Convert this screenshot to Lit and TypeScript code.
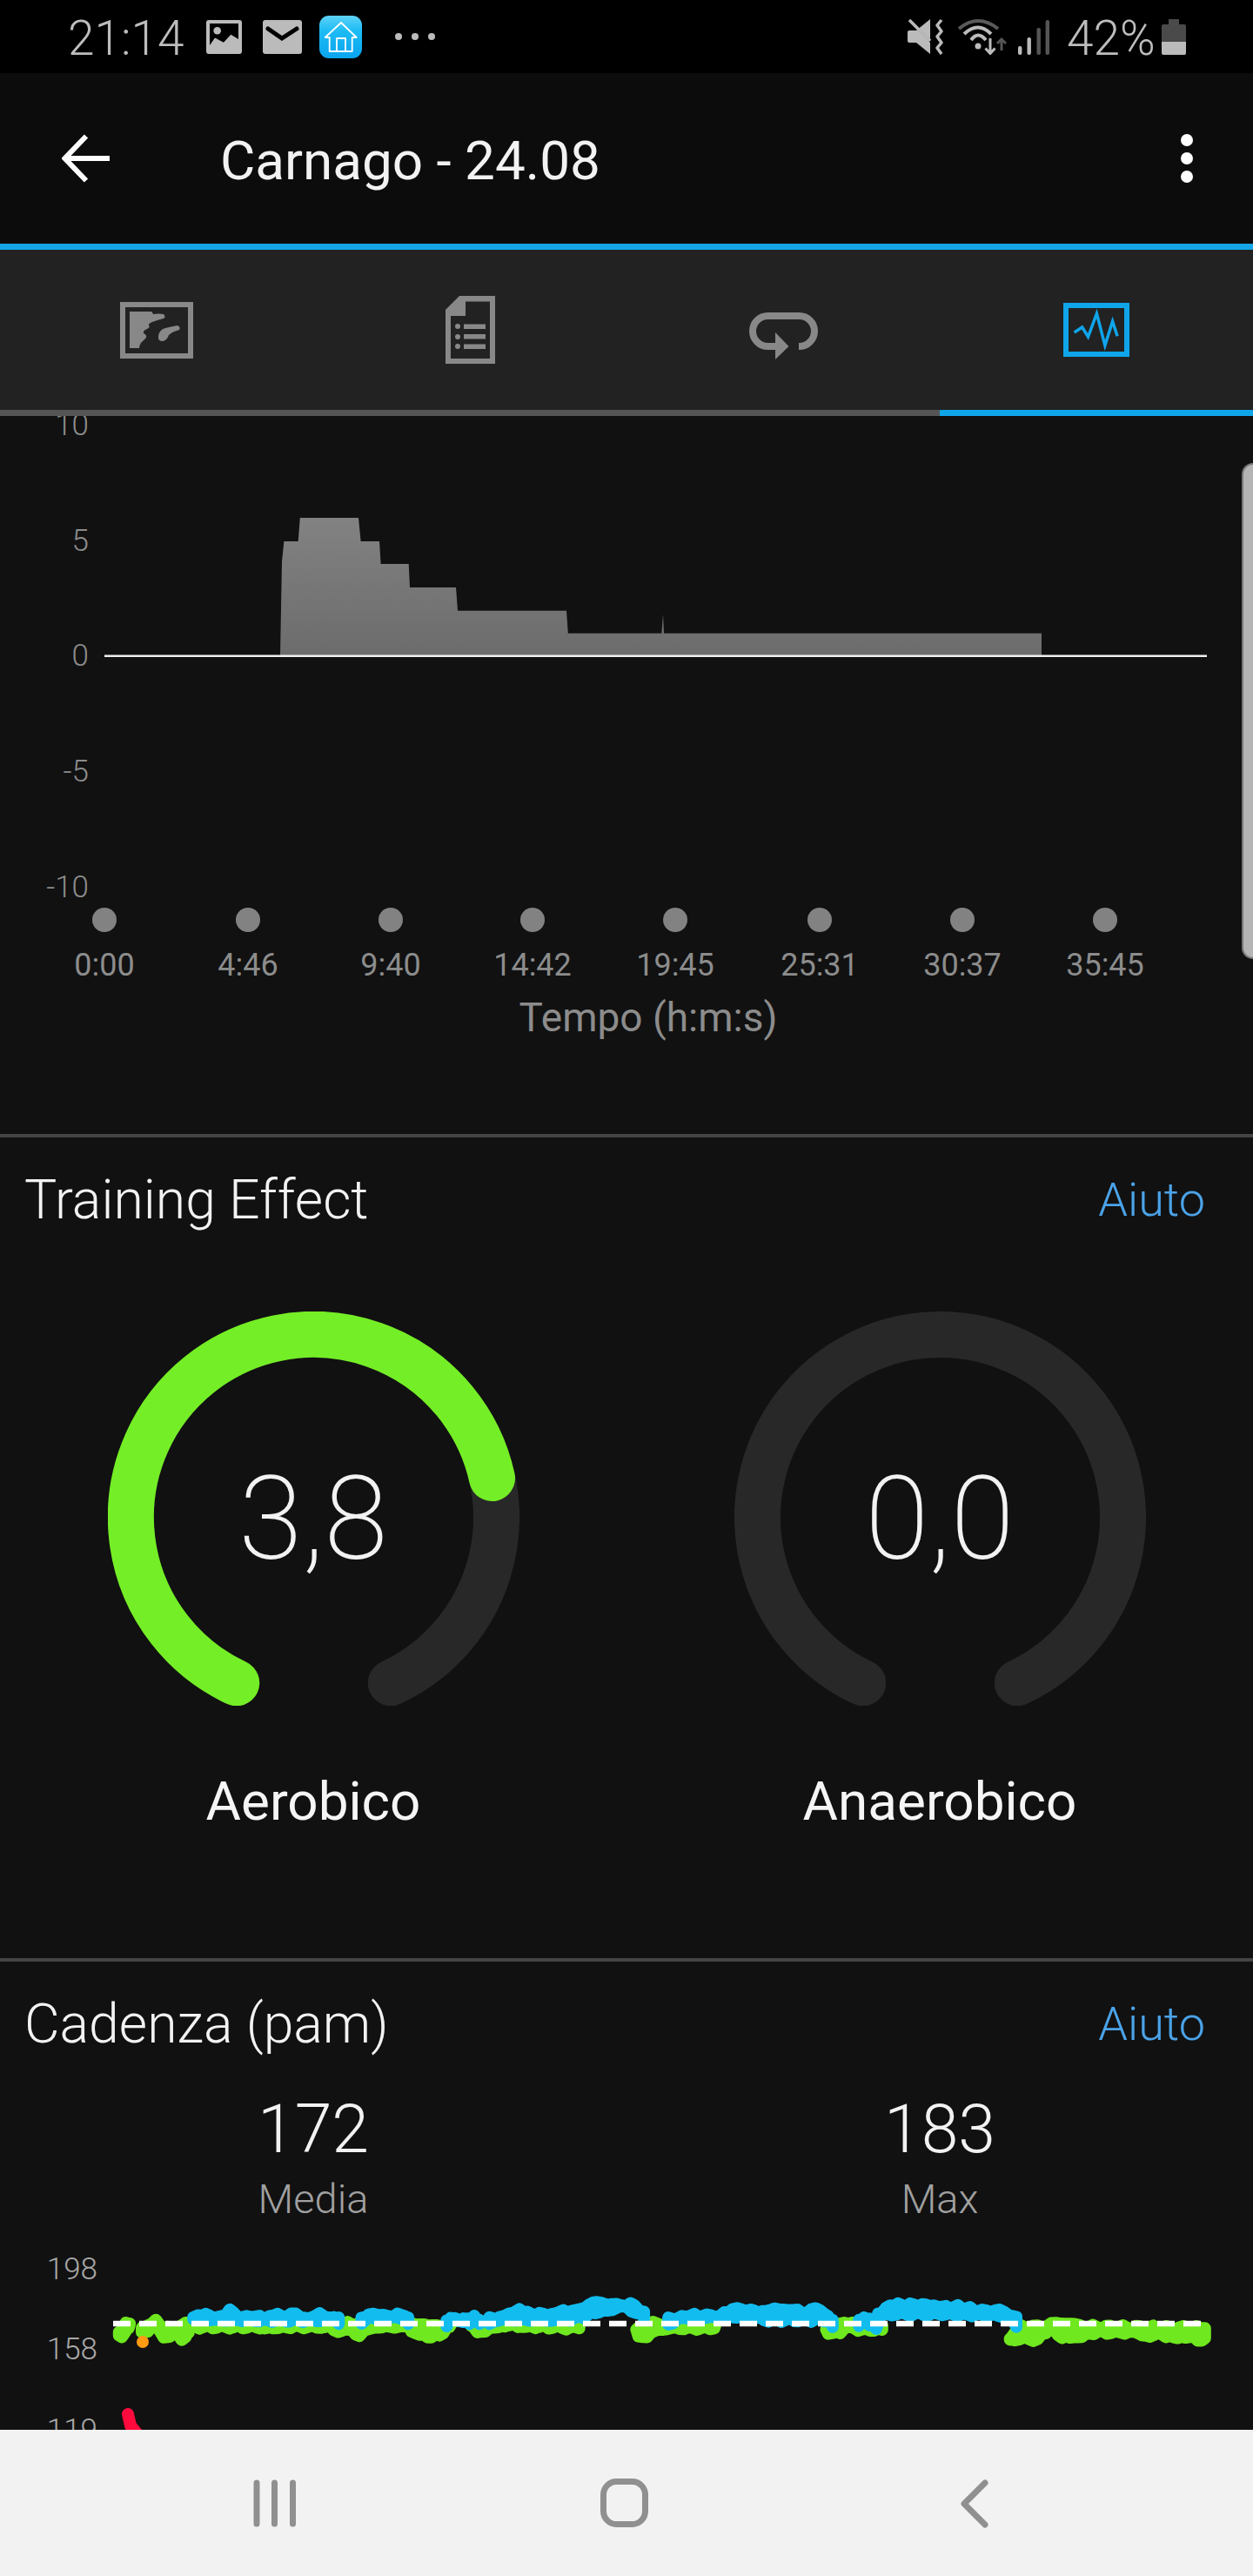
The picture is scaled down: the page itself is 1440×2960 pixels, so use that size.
import { LitElement, html, css, svg } from "lit";
import { customElement } from "lit/decorators.js";

type P = [number, number];
const R = 1568;
const r = (a: P[]): P[] => a.map(([x, y]) => [x + R, y] as P);

// The profiles are sampled every few pixels with a small repeatable ripple,
// which the round stroke join turns into the scalloped dots of the cadence trace.
function dense(a: P[], inset: number, seed: number): string[] {
  const out: string[] = [];
  for (let i = 0; i < a.length - 1; i++) {
    const x0 = a[i][0] / 2.178, y0 = 2500 + a[i][1] / 3;
    const x1 = a[i + 1][0] / 2.178, y1 = 2500 + a[i + 1][1] / 3;
    const n = Math.max(1, Math.round((x1 - x0) / 5));
    for (let k = 0; k < n; k++) {
      const x = x0 + ((x1 - x0) * k) / n;
      const y = y0 + ((y1 - y0) * k) / n;
      const wiggle = 1.4 * Math.sin(x * 0.9 + seed) + 0.9 * Math.sin(x * 0.37 + seed * 2);
      out.push(`${x.toFixed(1)},${(y + inset + wiggle).toFixed(1)}`);
    }
  }
  const l = a[a.length - 1];
  out.push(`${(l[0] / 2.178).toFixed(1)},${(2500 + l[1] / 3 + inset).toFixed(1)}`);
  return out;
}

function blob(top: P[], bottom: P[], color: string, seed: number, grow = 0) {
  const pts = [...dense(top, 7, seed), ...dense(bottom, -7 + grow, seed + 2).reverse()];
  return svg`<polygon points=${pts.join(" ")} fill=${color} stroke=${color} stroke-width="14" stroke-linejoin="round"></polygon>`;
}

const GREEN = "#6fe81f";
const BLUE = "#12bcee";

const greens: [P[], P[]][] = [
  [[[298, 520], [315, 490], [322, 505]], [[298, 570], [305, 570], [325, 525]]],
  [[[355, 520], [370, 495], [390, 480], [410, 505], [440, 510], [465, 490], [472, 520]], [[355, 545], [370, 555], [385, 530], [410, 570], [425, 570], [440, 550], [455, 578], [465, 570], [472, 530]]],
  [[[478, 500], [1020, 500]], [[478, 530], [540, 530], [595, 532], [650, 530], [685, 545], [720, 525], [790, 532], [825, 532], [835, 550], [880, 545], [900, 572], [912, 550], [950, 532], [1020, 530]]],
  [[[860, 490], [900, 490], [905, 520]], [[860, 540], [905, 540]]],
  [[[1030, 490], [1125, 500]], [[1030, 553], [1070, 570], [1100, 565], [1130, 525]]],
  [[[1180, 500], [1220, 490], [1450, 505]], [[1180, 528], [1195, 556], [1225, 545], [1260, 530], [1330, 532], [1360, 530], [1450, 532]]],
  [r([[25, 510], [55, 490], [90, 490], [100, 505]]), r([[30, 570], [52, 570], [70, 545], [92, 550], [105, 530]])],
  [r([[100, 505], [220, 505]]), r([[100, 530], [150, 532], [222, 532]])],
  [r([[500, 510], [535, 488], [565, 488], [600, 490], [640, 510]]), r([[505, 556], [535, 556], [548, 532], [570, 545], [600, 545], [620, 550], [640, 532]])],
  [r([[960, 540], [985, 500], [1040, 500], [1075, 488], [1110, 488], [1135, 500], [1448, 505]]), r([[960, 578], [1030, 578], [1060, 540], [1090, 572], [1130, 572], [1170, 555], [1280, 555], [1300, 572], [1330, 555], [1360, 572], [1420, 572], [1440, 586], [1448, 575]])],
];

const blues: [P[], P[]][] = [
  [[[484, 470], [495, 460], [525, 460], [545, 472], [575, 445], [605, 470], [640, 460], [660, 475], [675, 458], [695, 462], [740, 458], [775, 472], [800, 458], [835, 470], [848, 490]], [[484, 515], [540, 518], [660, 520], [780, 520], [848, 510]]],
  [[[905, 490], [922, 460], [960, 460], [985, 460], [1015, 460], [1022, 490]], [[905, 510], [1022, 510]]],
  [[[1118, 495], [1128, 475], [1160, 475], [1175, 490], [1187, 465], [1200, 490]], [[1118, 518], [1200, 518]]],
  [[[1225, 490], [1250, 465], [1285, 455], [1300, 437], [1320, 455], [1380, 458], [1410, 445], [1440, 448], [1455, 440], [1495, 410], [1520, 425], [R, 425], [R + 20, 425], [R + 35, 445], [R + 44, 470]], [[1225, 515], [1380, 520], [1450, 512], [1480, 495], [1520, 485], [R, 470], [R + 25, 495], [R + 44, 490]]],
  [r([[105, 490], [150, 460], [190, 462], [235, 462], [265, 440], [300, 440], [330, 450], [370, 440], [405, 440], [440, 450], [485, 438], [505, 470], [516, 500]]), r([[105, 515], [200, 510], [300, 505], [345, 518], [516, 518]])],
  [r([[582, 495], [595, 472], [608, 495]]), r([[582, 514], [608, 514]])],
  [r([[625, 500], [640, 450], [660, 425], [690, 425], [750, 425], [790, 432], [840, 432], [880, 445], [945, 445], [965, 470], [976, 500]]), r([[630, 498], [700, 498], [790, 498], [940, 503], [976, 508]])],
];

const ticks: [number, string][] = [
  [120, "0:00"], [285, "4:46"], [449, "9:40"], [612, "14:42"],
  [776, "19:45"], [942, "25:31"], [1106, "30:37"], [1270, "35:45"],
];
const yLabels: [number, string][] = [[500, "10"], [633, "5"], [765, "0"], [898, "-5"], [1031, "-10"]];

const area = "322,753 324,645 326.4,622 342.7,622 344.8,595 412,595 414.6,622 436,622 437.6,648 469.7,648 471,675 524,675 526,701.7 651,701.7 652.8,727.7 760.4,727.7 762,706 763,727.7 1197,727.7 1197,753";

@customElement("x-status")
class XStatus extends LitElement {
  static styles = css`
    :host { display: flex; align-items: center; height: 84px; background: #000; color: #bdbdbd;
      font-family: Roboto, "Liberation Sans", sans-serif; font-weight: 300; font-size: 55px; }
    svg { display: block; flex: none; }
    .time { margin-left: 78px; width: 130px; line-height: 88px; height: 84px; white-space: nowrap; }
    .img { margin-left: 29px; }
    .mail { margin-left: 24px; }
    .home { margin-left: 20px; }
    .more { margin-left: 36px; }
    .mute { margin-left: auto; }
    .wifi { margin-left: 16px; }
    .sig { margin-left: 12px; }
    .pct { margin-left: 20px; width: 96px; line-height: 88px; height: 84px; white-space: nowrap; }
    .bat { margin-left: 13px; margin-right: 77px; }
  `;
  render() {
    return html`
      <span class="time">21:14</span>
      <svg class="img" width="41" height="39" viewBox="0 0 41 39">
        <rect width="41" height="39" rx="3" fill="#bbb"></rect>
        <path d="M4 4H37V22L28.3 16.7 20 25.7 10 20.6 4 29Z" fill="#000"></path>
        <circle cx="12.7" cy="12.3" r="4.3" fill="#bbb"></circle>
      </svg>
      <svg class="mail" width="45" height="39" viewBox="0 0 45 39">
        <rect width="45" height="39" rx="3" fill="#bbb"></rect>
        <path d="M6 10L22 21 39 10" fill="none" stroke="#000" stroke-width="5" stroke-linecap="round"></path>
      </svg>
      <svg class="home" width="49" height="49" viewBox="0 0 49 49">
        <defs><linearGradient id="hg" x1="0" y1="0" x2="0" y2="1">
          <stop offset="0" stop-color="#5ed2f8"></stop><stop offset=".35" stop-color="#1dbcf5"></stop><stop offset="1" stop-color="#0aa4ee"></stop>
        </linearGradient></defs>
        <rect width="49" height="49" rx="11" fill="url(#hg)"></rect>
        <path d="M25 8L6.7 25H11.7V41H37.7V25H42.7ZM20 41V26H30V41" fill="none" stroke="#fff" stroke-width="1.8" stroke-linejoin="round"></path>
      </svg>
      <svg class="more" width="50" height="10" viewBox="0 0 50 10">
        <circle cx="6" cy="5" r="4" fill="#bbb"></circle><circle cx="25" cy="5" r="4" fill="#bbb"></circle><circle cx="44" cy="5" r="4" fill="#bbb"></circle>
      </svg>
      <svg class="mute" width="42" height="42" viewBox="0 0 42 42">
        <path d="M2 14H10L26 1V41L10 28H2Q0 28 0 26V16Q0 14 2 14Z" fill="#bbb"></path>
        <path d="M0 0L27 27" stroke="#000" stroke-width="3"></path>
        <path d="M2 2L26 26" stroke="#bbb" stroke-width="3.5"></path>
        <path d="M39 2L34 8 39 15 34 21 39 28 34 34 39 41" fill="none" stroke="#bbb" stroke-width="3.5" stroke-linejoin="round"></path>
      </svg>
      <svg class="wifi" width="57" height="42" viewBox="0 0 57 42">
        <path d="M1 12Q23 -6 46 12" fill="none" stroke="#5a5a5a" stroke-width="4"></path>
        <path d="M7 18Q23 3 38 18" fill="none" stroke="#bbb" stroke-width="4"></path>
        <path d="M15 25Q23 14 32 25" fill="none" stroke="#bbb" stroke-width="4"></path>
        <circle cx="23" cy="32" r="3.5" fill="#bbb"></circle>
        <path d="M37 23V40M31.5 34.5L37 40.5 42.5 34.5" fill="none" stroke="#bbb" stroke-width="3"></path>
        <path d="M50 37V24M45 29L50 24 55 29" fill="none" stroke="#555" stroke-width="3"></path>
      </svg>
      <svg class="sig" width="36" height="42" viewBox="0 0 36 42">
        <rect x="0" y="32" width="4.4" height="10" rx="2" fill="#bbb"></rect>
        <rect x="10.500" y="22" width="4.400" height="20" rx="2" fill="#bbb"></rect>
        <rect x="21.500" y="11" width="4.400" height="31" rx="2" fill="#555"></rect>
        <rect x="31.600" y="2" width="4.400" height="40" rx="2" fill="#555"></rect>
      </svg>
      <span class="pct">42%</span>
      <svg class="bat" width="28" height="41" viewBox="0 0 28 41">
        <path d="M8 0H20V6H26Q28 6 28 8V26H0V8Q0 6 2 6H8Z" fill="#4a4a4a"></path>
        <path d="M0 26H28V39Q28 41 26 41H2Q0 41 0 39Z" fill="#bbb"></path>
      </svg>
    `;
  }
}

@customElement("x-header")
class XHeader extends LitElement {
  static styles = css`
    :host { display: flex; align-items: center; height: 196px; background: #0c0c0c; border-bottom: 7px solid #14a5e8;
      font-family: Roboto, "Liberation Sans", sans-serif; color: #f2f2f2; }
    svg { display: block; flex: none; }
    .back { margin-left: 71px; }
    .title { margin-left: 127px; font-size: 62px; line-height: 202px; height: 196px; flex: 1; }
    .menu { margin-right: 69px; }
  `;
  render() {
    return html`
      <svg class="back" width="55" height="56" viewBox="0 0 55 56">
        <path d="M55 28H5M28 2.500L3.500 28 28 53.500" fill="none" stroke="#fff" stroke-width="6"></path>
      </svg>
      <span class="title">Carnago - 24.08</span>
      <svg class="menu" width="14" height="56" viewBox="0 0 14 56">
        <circle cx="7" cy="7" r="7" fill="#fff"></circle><circle cx="7" cy="28" r="7" fill="#fff"></circle><circle cx="7" cy="49" r="7" fill="#fff"></circle>
      </svg>
    `;
  }
}

@customElement("x-tabs")
class XTabs extends LitElement {
  static styles = css`
    :host { display: block; background: #222; }
    .row { display: grid; grid-template-columns: repeat(4, 360px); height: 184px; }
    .tab { display: flex; align-items: center; justify-content: center; }
    .bars { display: grid; grid-template-columns: 1080px 360px; height: 7px; }
    .off { background: #555; }
    .on { background: #0fa5ea; }
    .loop { padding-top: 14px; }
    svg { display: block; }
  `;
  render() {
    return html`
      <div class="row">
        <div class="tab">
          <svg width="84" height="65" viewBox="0 0 84 65">
            <rect x="3" y="3" width="78" height="59" fill="none" stroke="#888" stroke-width="6"></rect>
            <path d="M11 11H36Q38 13 38 14Q45 13 50 14Q53 17 50 19Q42 21 37 23Q32 25 33 27Q35 29 31 31Q26 33 27 36Q31 38 30 41Q26 45 24 47Q22 50 22 53H11Z" fill="#888"></path>
            <path d="M44 39Q45 32 52 30Q60 28 66 27Q70 29 68 32Q60 34 56 38Q54 44 49 45Q43 45 44 39Z" fill="#888"></path>
          </svg>
        </div>
        <div class="tab">
          <svg width="57" height="78" viewBox="0 0 57 78">
            <path fill-rule="evenodd" d="M16 0H57V78H0V16ZM23 6.500V23H6V72H51V6.500Z" fill="#888"></path>
            <circle cx="14" cy="35" r="3" fill="#888"></circle><circle cx="14" cy="47" r="3" fill="#888"></circle><circle cx="14" cy="58" r="3" fill="#888"></circle>
            <rect x="21" y="32.500" width="25" height="5.500" fill="#888"></rect><rect x="21" y="44" width="25" height="5.500" fill="#888"></rect><rect x="21" y="55.500" width="25" height="5.500" fill="#888"></rect>
          </svg>
        </div>
        <div class="tab loop">
          <svg width="79" height="54" viewBox="0 0 79 54">
            <path d="M57 39H57.500A17.500 17.500 0 0 0 57.500 4H21.500A17.500 17.500 0 0 0 21.500 39H32" fill="none" stroke="#888" stroke-width="8"></path>
            <path d="M30 23L45.500 39 30 54Z" fill="#888"></path>
          </svg>
        </div>
        <div class="tab">
          <svg width="76" height="62" viewBox="0 0 76 62">
            <rect x="3" y="3" width="70" height="56" fill="none" stroke="#0fa5ea" stroke-width="6"></rect>
            <path d="M12.600 34L21.700 28 28.500 39 38.400 12.300 47.900 49 56.600 21.300 62.100 38.300" fill="none" stroke="#0fa5ea" stroke-width="3.500"></path>
          </svg>
        </div>
      </div>
      <div class="bars"><div class="off"></div><div class="on"></div></div>
    `;
  }
}

@customElement("x-gauge")
class XGauge extends LitElement {
  static properties = { value: {}, label: {}, end: { type: Array } };
  declare value: string;
  declare label: string;
  declare end: number[] | null;
  static styles = css`
    :host { display: flex; flex-direction: column; align-items: center; }
    .ring { position: relative; width: 473px; height: 453px; }
    svg { display: block; }
    .value { position: absolute; left: 0; right: 0; top: 159px; text-align: center; font-size: 133px; line-height: 160px; font-weight: 200; color: #f2f2f2; }
    .label { margin-top: 70px; font-size: 62px; line-height: 80px; color: #f5f5f5; }
  `;
  render() {
    const c = 236.5;
    const sx = c - 88.75, sy = c + 190.3, ex = c + 88.75;
    return html`
      <div class="ring">
        <svg width="473" height="453" viewBox="0 0 473 453">
          <path d="M${sx} ${sy}A210 210 0 1 1 ${ex} ${sy}" fill="none" stroke="#282828" stroke-width="53" stroke-linecap="round"></path>
          ${this.end
            ? svg`<path d="M${sx} ${sy}A210 210 0 1 1 ${c + this.end[0]} ${c + this.end[1]}" fill="none" stroke="#74ee26" stroke-width="53" stroke-linecap="round"></path>`
            : ""}
        </svg>
        <div class="value">${this.value}</div>
      </div>
      <div class="label">${this.label}</div>
    `;
  }
}

@customElement("app-root")
export class AppRoot extends LitElement {
  static styles = css`
    :host { display: flex; flex-direction: column; width: 1440px; height: 2960px; overflow: hidden; background: #111;
      font-family: Roboto, "Liberation Sans", sans-serif; }
    .content { position: relative; height: 2314px; overflow: hidden; background: #111; flex: none; }
    svg { display: block; }
    .sect { border-bottom: 4px solid #444; }
    .top svg { width: 1440px; height: 825px; }
    .axis { font-size: 35px; font-weight: 300; fill: #8c8c8c; }
    .xt { font-size: 36px; font-weight: 400; fill: #8c8c8c; text-anchor: middle; }
    .xtitle { font-size: 46px; font-weight: 400; fill: #8c8c8c; text-anchor: middle; }
    .head { display: flex; justify-content: space-between; align-items: center; height: 142px; padding: 0 55px 0 28px; }
    .h { font-size: 62.500px; font-weight: 300; color: #f2f2f2; }
    .help { font-size: 54px; font-weight: 300; color: #4ba3e8; }
    .two { display: grid; grid-template-columns: 720px 720px; }
    .gauges { padding: 58px 0 140px; }
    .stat { display: flex; flex-direction: column; align-items: center; }
    .v { font-size: 77px; line-height: 102px; font-weight: 300; color: #f2f2f2; }
    .l { font-size: 47px; line-height: 58px; font-weight: 300; color: #a0a0a0; }
    .cad svg { width: 1440px; height: 236px; }
    .cl { font-size: 35px; font-weight: 300; fill: #a8a8a8; text-anchor: end; }
    .scroll { position: absolute; right: 0; top: 54px; width: 13px; height: 570px; box-sizing: border-box; background: #b4b4b4;
      border: solid #777; border-width: 2px 0 2px 2px; border-radius: 14px 0 0 14px; }
    .nav { display: block; flex: none; height: 168px; background: #f2f2f2; }
    .nav svg { width: 1440px; height: 168px; }
  `;
  render() {
    return html`
      <x-status></x-status>
      <x-header></x-header>
      <x-tabs></x-tabs>
      <div class="content">
        <div class="sect top">
          <svg viewBox="0 478 1440 825">
            <defs><linearGradient id="ag" x1="0" y1="0" x2="0" y2="1">
              <stop offset="0" stop-color="#828282"></stop><stop offset="1" stop-color="#6c6c6c"></stop>
            </linearGradient></defs>
            ${yLabels.map(([y, t]) => svg`<text class="axis" x="102" y=${y} text-anchor="end">${t}</text>`)}
            <polygon points=${area} fill="url(#ag)"></polygon>
            <rect x="120" y="752.500" width="1267" height="2.500" fill="#eee"></rect>
            ${ticks.map(([x, t]) => svg`
              <circle cx=${x} cy="1057" r="14" fill="#828282"></circle>
              <text class="xt" x=${x} y="1121">${t}</text>`)}
            <text class="xtitle" x="745" y="1185">Tempo (h:m:s)</text>
          </svg>
        </div>
        <div class="sect">
          <div class="head"><span class="h">Training Effect</span><span class="help">Aiuto</span></div>
          <div class="two gauges">
            <x-gauge value="3,8" label="Aerobico" .end=${[205, -45]}></x-gauge>
            <x-gauge value="0,0" label="Anaerobico"></x-gauge>
          </div>
        </div>
        <div class="cad">
          <div class="head"><span class="h">Cadenza (pam)</span><span class="help">Aiuto</span></div>
          <div class="two">
            <div class="stat"><span class="v">172</span><span class="l">Media</span></div>
            <div class="stat"><span class="v">183</span><span class="l">Max</span></div>
          </div>
          <svg viewBox="0 2556 1440 236">
            <text class="cl" x="112" y="2619">198</text>
            <text class="cl" x="112" y="2711">158</text>
            <text class="cl" x="112" y="2804">119</text>
            ${greens.map(([t, b], i) => blob(t, b, GREEN, i * 1.3, 2))}
            ${blues.map(([t, b], i) => blob(t, b, BLUE, i * 2.1))}
            <circle cx="164" cy="2691" r="7" fill="#ff9a12"></circle>
            <path d="M147 2774L150 2787 158 2797" fill="none" stroke="#ff0a3c" stroke-width="14" stroke-linecap="round"></path>
            <path d="M130 2670H1380" stroke="#fff" stroke-width="6.500" stroke-dasharray="20 10"></path>
          </svg>
        </div>
        <div class="scroll"></div>
      </div>
      <div class="nav">
        <svg viewBox="0 2792 1440 168">
          <path d="M295 2853V2900M315.500 2853V2900M336.500 2853V2900" stroke="#909090" stroke-width="7" stroke-linecap="round"></path>
          <rect x="693.500" y="2851.500" width="48" height="49" rx="15" fill="none" stroke="#909090" stroke-width="7"></rect>
          <path d="M1132 2853L1108 2877 1132 2901" fill="none" stroke="#909090" stroke-width="7" stroke-linecap="round" stroke-linejoin="round"></path>
        </svg>
      </div>
    `;
  }
}
